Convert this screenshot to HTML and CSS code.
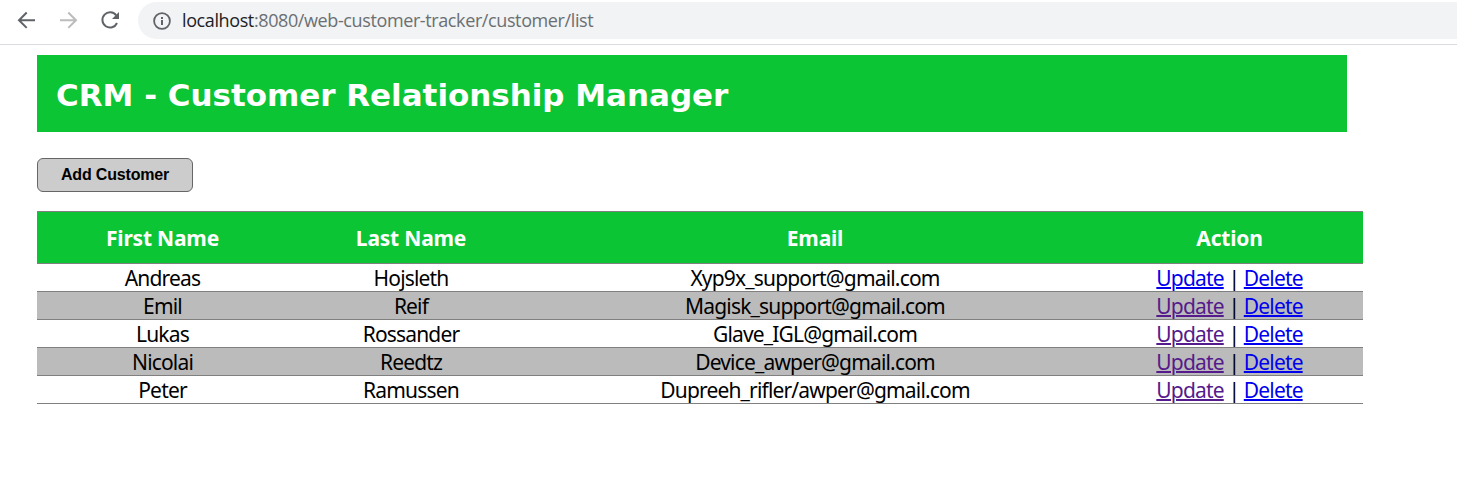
FILE: index.html
```html
<!DOCTYPE html>
<html lang="en">
<head>
<meta charset="utf-8">
<title>List Customers</title>
<link rel="stylesheet" href="styles.css">
</head>
<body>
<div class="toolbar">
  <svg class="nav" width="138" height="44" viewBox="0 0 138 44" fill="none" stroke-width="2">
    <path class="dark" d="M35 20.2H19.5M26.7 12.5L19 20.2L26.7 27.9"/>
    <path class="pale" d="M60 20.2H75.5M68.3 12.5L76 20.2L68.3 27.9"/>
    <path class="dark" d="M116.2 15.5A7.6 7.6 0 1 0 117 23"/>
    <path class="tip" d="M119 12V19H112Z"/>
  </svg>
  <div class="address">
    <svg class="info" width="18" height="18" viewBox="0 0 18 18">
      <circle cx="9" cy="9" r="7.9" fill="none" stroke="#5f6368" stroke-width="1.8"/>
      <path d="M8 8h2v5H8zM8 5h2v2H8z" fill="#5f6368"/>
    </svg>
    <span class="url"><span class="host">localhost</span>:8080/web-customer-tracker/customer/list</span>
  </div>
</div>
<div class="page">
  <div class="header"><h2>CRM - Customer Relationship Manager</h2></div>
  <button class="add-button">Add Customer</button>
  <table class="customers">
    <colgroup><col class="c-first"><col class="c-last"><col class="c-email"><col class="c-action"></colgroup>
    <tr><th>First Name</th><th>Last Name</th><th>Email</th><th>Action</th></tr>
    <tr><td>Andreas</td><td>Hojsleth</td><td>Xyp9x_support@gmail.com</td><td><a class="link">Update</a> <span class="bar">|</span> <a class="link">Delete</a></td></tr>
    <tr><td>Emil</td><td>Reif</td><td>Magisk_support@gmail.com</td><td><a class="link seen">Update</a> <span class="bar">|</span> <a class="link">Delete</a></td></tr>
    <tr><td>Lukas</td><td>Rossander</td><td>Glave_IGL@gmail.com</td><td><a class="link seen">Update</a> <span class="bar">|</span> <a class="link">Delete</a></td></tr>
    <tr><td>Nicolai</td><td>Reedtz</td><td>Device_awper@gmail.com</td><td><a class="link seen">Update</a> <span class="bar">|</span> <a class="link">Delete</a></td></tr>
    <tr><td>Peter</td><td>Ramussen</td><td>Dupreeh_rifler/awper@gmail.com</td><td><a class="link seen">Update</a> <span class="bar">|</span> <a class="link">Delete</a></td></tr>
  </table>
</div>
</body>
</html>
```
FILE: styles.css
```css
body { margin: 0; background: #fff; overflow: hidden; }
.toolbar { display: flex; height: 44px; border-bottom: 1px solid #dadce0; }
.nav { flex: none; }
.dark { stroke: #5f6368; }
.pale { stroke: #babcbe; }
.tip { fill: #5f6368; }
.address { flex: 1; height: 37px; margin-top: 2px; padding-left: 15px; box-sizing: border-box; display: flex; align-items: center; gap: 11px; background: #f1f3f4; border-radius: 19px 0 0 19px; }
.info { flex: none; }
.url { font: 18px/37px "Open Sans", sans-serif; letter-spacing: -0.39px; color: #6b6f73; white-space: nowrap; }
.host { color: #202124; }
.page { padding: 10px 94px 0 37px; }
.header { width: 1310px; height: 77px; box-sizing: border-box; padding-left: 19px; background: #0bc534; }
h2 { margin: 0; font: bold 31px/81px "DejaVu Sans", Verdana, sans-serif; letter-spacing: -0.03px; color: #fff; white-space: nowrap; }
.add-button { display: block; width: 156px; height: 34px; margin: 26px 0 19px; padding: 0 0 1px; background: #ccc; border: 1px solid #666; border-radius: 6px; font: bold 16px "Liberation Sans", Arial, sans-serif; letter-spacing: -0.17px; color: #000; }
.customers { width: 1326px; table-layout: fixed; border-collapse: collapse; border-bottom: 1px solid gray; font: 21px/25px "Noto Sans", Tahoma, sans-serif; letter-spacing: -0.83px; color: #000; }
.c-first { width: 251px; }
.c-last { width: 246px; }
.c-email { width: 562px; }
.c-action { width: 267px; }
th, td { padding: 2px 0 0; text-align: center; border-top: 1px solid gray; white-space: nowrap; }
th { height: 49px; background: #0bc534; color: #fff; letter-spacing: -0.2px; }
td { height: 25px; }
tr:nth-child(odd) td { background: #bbb; }
.link { color: #00e; text-decoration: underline; text-decoration-thickness: 2px; }
.seen { color: #551a8b; }
```
